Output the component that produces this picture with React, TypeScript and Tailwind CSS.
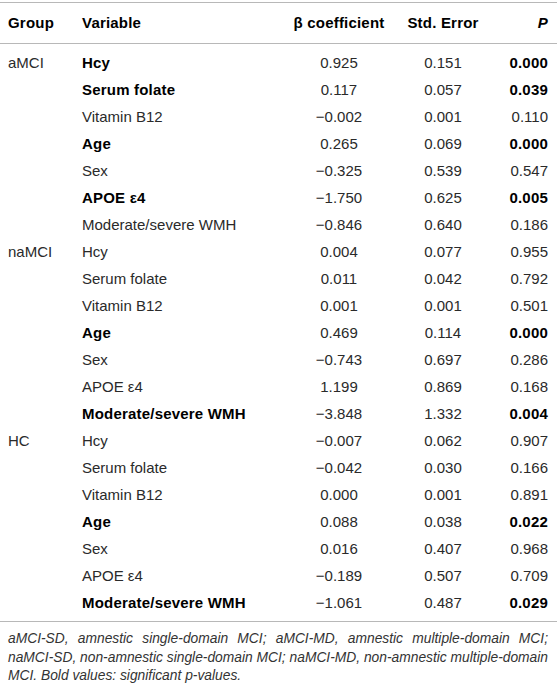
import React from 'react';

type Row = {
  group?: string;
  variable: string;
  beta: string;
  se: string;
  p: string;
  boldVar?: boolean;
  boldP?: boolean;
};

const rows: Row[] = [
  { group: 'aMCI', variable: 'Hcy', beta: '0.925', se: '0.151', p: '0.000', boldVar: true, boldP: true },
  { variable: 'Serum folate', beta: '0.117', se: '0.057', p: '0.039', boldVar: true, boldP: true },
  { variable: 'Vitamin B12', beta: '−0.002', se: '0.001', p: '0.110' },
  { variable: 'Age', beta: '0.265', se: '0.069', p: '0.000', boldVar: true, boldP: true },
  { variable: 'Sex', beta: '−0.325', se: '0.539', p: '0.547' },
  { variable: 'APOE ε4', beta: '−1.750', se: '0.625', p: '0.005', boldVar: true, boldP: true },
  { variable: 'Moderate/severe WMH', beta: '−0.846', se: '0.640', p: '0.186' },
  { group: 'naMCI', variable: 'Hcy', beta: '0.004', se: '0.077', p: '0.955' },
  { variable: 'Serum folate', beta: '0.011', se: '0.042', p: '0.792' },
  { variable: 'Vitamin B12', beta: '0.001', se: '0.001', p: '0.501' },
  { variable: 'Age', beta: '0.469', se: '0.114', p: '0.000', boldVar: true, boldP: true },
  { variable: 'Sex', beta: '−0.743', se: '0.697', p: '0.286' },
  { variable: 'APOE ε4', beta: '1.199', se: '0.869', p: '0.168' },
  { variable: 'Moderate/severe WMH', beta: '−3.848', se: '1.332', p: '0.004', boldVar: true, boldP: true },
  { group: 'HC', variable: 'Hcy', beta: '−0.007', se: '0.062', p: '0.907' },
  { variable: 'Serum folate', beta: '−0.042', se: '0.030', p: '0.166' },
  { variable: 'Vitamin B12', beta: '0.000', se: '0.001', p: '0.891' },
  { variable: 'Age', beta: '0.088', se: '0.038', p: '0.022', boldVar: true, boldP: true },
  { variable: 'Sex', beta: '0.016', se: '0.407', p: '0.968' },
  { variable: 'APOE ε4', beta: '−0.189', se: '0.507', p: '0.709' },
  { variable: 'Moderate/severe WMH', beta: '−1.061', se: '0.487', p: '0.029', boldVar: true, boldP: true },
];

const grid = 'grid grid-cols-[74px_206px_102px_106px_52px] pl-2 pr-[9px]';
const bold = 'font-bold text-black tracking-[0.2px]';

export default function App() {
  return (
    <div className="w-[557px] h-[683px] bg-white text-[15px] text-[#2a2a2a] font-['Liberation_Sans',Arial,sans-serif] overflow-hidden">
      <div className="pt-[2px]">
        <div className="h-px bg-[#b8b8b8]" />
        <div className={`${grid} h-[40px] items-center ${bold}`}>
          <div>Group</div>
          <div>Variable</div>
          <div className="text-center">β coefficient</div>
          <div className="text-center">Std. Error</div>
          <div className="text-right italic">P</div>
        </div>
        <div className="h-px bg-[#b8b8b8]" />
        <div className="pt-[6px] pb-[4px]">
          {rows.map((r, i) => (
            <div key={i} className={`${grid} h-[27px] items-center`}>
              <div>{r.group ?? ''}</div>
              <div className={r.boldVar ? bold : ''}>{r.variable}</div>
              <div className="text-center">{r.beta}</div>
              <div className="text-center">{r.se}</div>
              <div className={r.boldP ? `text-right ${bold}` : 'text-right'}>{r.p}</div>
            </div>
          ))}
        </div>
        <div className="h-px bg-[#b8b8b8]" />
        <div className="pl-2 pr-[9px] pt-[8px] text-[13.8px] leading-[18.5px] italic text-[#333]">
          <div className="whitespace-nowrap text-justify [text-align-last:justify]">
            aMCI-SD, amnestic single-domain MCI; aMCI-MD, amnestic multiple-domain MCI;
          </div>
          <div className="whitespace-nowrap text-justify [text-align-last:justify]">
            naMCI-SD, non-amnestic single-domain MCI; naMCI-MD, non-amnestic multiple-domain
          </div>
          <div>MCI. Bold values: significant p-values.</div>
        </div>
      </div>
    </div>
  );
}
